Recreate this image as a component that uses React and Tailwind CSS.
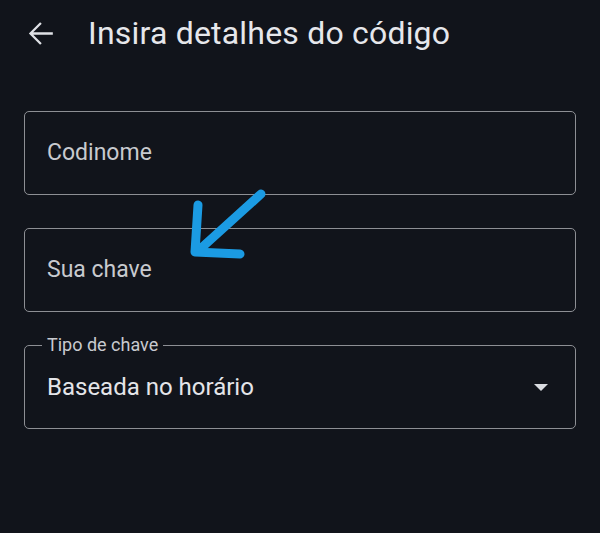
export default function App() {
  return (
    <div className="relative h-[533px] w-[600px] overflow-hidden bg-[#11141b] font-['Roboto',sans-serif]">
      <header className="flex h-[66px] items-center">
        <button className="ml-[22px] flex h-[37px] w-[37px] items-center justify-center text-[#dfe1e6]" aria-label="Voltar">
          <svg viewBox="0 0 24 24" className="h-[37px] w-[37px]" fill="currentColor">
            <path d="M20 11.25H7.3l5.5-5.5L11.75 4.7 4.45 12l7.3 7.3 1.05-1.05-5.5-5.5H20z" />
          </svg>
        </button>
        <h1 className="ml-[29px] text-[32px] leading-none tracking-[0.2px] text-[#e6e7eb]">
          Insira detalhes do código
        </h1>
      </header>

      <div className="mt-[45px] flex flex-col gap-[33px] px-[24px]">
        <div className="flex h-[84px] items-center rounded-[5px] border-[1.5px] border-[#8d8f94] px-[22px]">
          <span className="text-[23px] text-[#c8cacf]">Codinome</span>
        </div>

        <div className="flex h-[84px] items-center rounded-[5px] border-[1.5px] border-[#8d8f94] px-[22px]">
          <span className="text-[23px] text-[#c8cacf]">Sua chave</span>
        </div>

        <div className="relative flex h-[84px] items-center justify-between rounded-[5px] border-[1.5px] border-[#8d8f94] pl-[22px] pr-[27px]">
          <span className="absolute -top-[12px] left-[17px] bg-[#11141b] px-[5px] text-[18px] leading-[22px] text-[#c8cacf]">
            Tipo de chave
          </span>
          <span className="text-[24px] text-[#e4e5e9]">Baseada no horário</span>
          <svg viewBox="0 0 14 7" className="h-[7px] w-[14px]" fill="#dadce1">
            <path d="M0 0h14L7 7z" />
          </svg>
        </div>
      </div>

      <svg
        className="pointer-events-none absolute left-0 top-0"
        width="600"
        height="533"
        viewBox="0 0 600 533"
        fill="none"
        stroke="#1b9be3"
        strokeWidth="9"
        strokeLinecap="round"
        strokeLinejoin="round"
      >
        <path d="M261 194 L198 251" />
        <path d="M198 205 L195 252 L240 254" />
      </svg>
    </div>
  );
}
